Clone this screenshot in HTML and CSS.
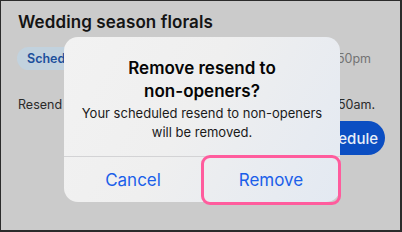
FILE: index.html
```html
<!DOCTYPE html>
<html>
<head>
<meta charset="utf-8">
<link rel="stylesheet" href="styles.css">
</head>
<body>
<div class="frame">
  <div class="page">
    <h1 class="title">Wedding season florals</h1>
    <div class="row status-row">
      <span class="badge">Scheduled</span>
      <span class="when">Wed, June 9 at 4:50pm</span>
    </div>
    <div class="row resend-row">
      <span class="resend">Resend to non-openers</span>
      <span class="when2">Thu, June 10 at 8:50am.</span>
    </div>
    <div class="row btn-row">
      <button class="btn-primary">Schedule</button>
    </div>
  </div>
  <div class="dialog">
    <div class="dialog-body">
      <div class="dialog-title">Remove resend to<br>non-openers?</div>
      <div class="dialog-text">Your scheduled resend to non-openers<br>will be removed.</div>
    </div>
    <div class="dialog-actions">
      <div class="action">Cancel</div>
      <div class="action">Remove</div>
    </div>
  </div>
  <div class="highlight"></div>
</div>
</body>
</html>
```
FILE: styles.css
```css
* { box-sizing: border-box; }
html, body { margin: 0; padding: 0; }
body { width: 402px; height: 232px; overflow: hidden; font-family: Inter, "Open Sans", sans-serif; }
.frame {
  position: relative;
  width: 402px;
  height: 232px;
  background: #cbcbcb;
  border-style: solid;
  border-color: #2b2b2b;
  border-width: 1px 2px 2px 1px;
  overflow: hidden;
}
.page { padding: 10px 16px 0 16px; }
.title {
  margin: 0 0 0 1px;
  font-size: 17px;
  font-weight: 600;
  line-height: 22px;
  color: #141414;
  letter-spacing: 0.1px;
}
.row { display: flex; align-items: center; }
.status-row { margin-top: 14px; height: 23px; }
.badge {
  background: #c2d2de;
  color: #1c4f9c;
  font-size: 12.5px;
  font-weight: 600;
  height: 23px;
  line-height: 23px;
  padding: 0 10px;
  border-radius: 12px;
}
.when {
  margin-left: auto;
  margin-right: 13px;
  font-size: 12.5px;
  color: #737373;
}
.resend-row { margin-top: 25px; height: 18px; }
.resend { font-size: 12.5px; color: #2a2a2a; margin-left: 1px; }
.when2 { margin-left: auto; margin-right: 9px; font-size: 12.5px; color: #2a2a2a; }
.btn-row { justify-content: flex-end; margin-top: 8px; }
.btn-primary {
  border: none;
  background: #0b4ec2;
  color: #e8eef8;
  font-family: Inter, sans-serif;
  font-size: 15px;
  font-weight: 500;
  height: 34px;
  padding: 0 7px 0 18px;
  border-radius: 17px;
  margin-right: -1px;
}
.dialog {
  position: absolute;
  left: 63px;
  top: 36px;
  width: 276px;
  height: 165px;
  border-radius: 14px;
  background: linear-gradient(120deg, #f2f2f2 0%, #efefef 45%, #e3e9f2 100%);
  display: flex;
  flex-direction: column;
  overflow: hidden;
}
.dialog-body {
  height: 120px;
  padding-top: 20px;
  text-align: center;
  border-bottom: 1px solid #d3d3d5;
}
.dialog-title {
  font-family: Inter, sans-serif;
  font-size: 17px;
  font-weight: 600;
  line-height: 23px;
  color: #050505;
}
.dialog-text {
  margin-top: 1px;
  font-family: Inter, sans-serif;
  font-size: 13px;
  line-height: 19px;
  color: #1a1a1a;
}
.dialog-actions { flex: 1; display: flex; }
.action {
  flex: 1;
  display: flex;
  align-items: center;
  justify-content: center;
  font-family: Inter, sans-serif;
  font-size: 17px;
  color: #1b5fe9;
}
.highlight {
  position: absolute;
  left: 200px;
  top: 154px;
  width: 140px;
  height: 50px;
  border: 3px solid #ff5c9d;
  border-radius: 9px;
}
```
